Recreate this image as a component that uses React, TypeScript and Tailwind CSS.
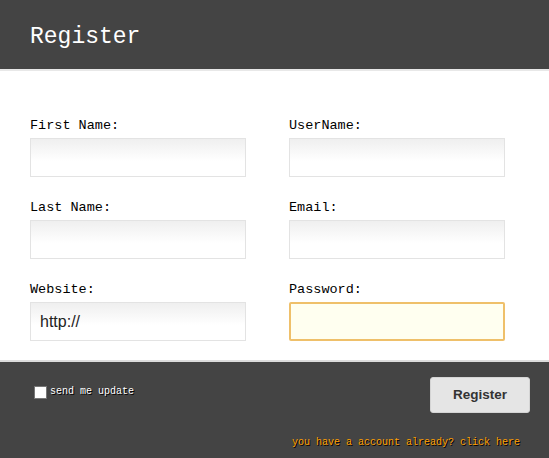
import React from "react";

const mono = { fontFamily: '"Liberation Mono", "DejaVu Sans Mono", monospace' };

function Field({ label, value, focused }: { label: string; value?: string; focused?: boolean }) {
  return (
    <div className="flex flex-col w-[216px]">
      <label className="text-[13.5px] leading-[16px] text-black" style={mono}>
        {label}
      </label>
      <input
        defaultValue={value}
        className={
          focused
            ? "mt-[4px] h-[39px] w-[216px] rounded-[2px] border-2 border-[#efc06a] bg-[#fffff0] px-[9px] text-[16px] text-[#333] outline-none"
            : "mt-[4px] h-[39px] w-[216px] border border-[#e3e3e3] bg-gradient-to-b from-[#efefef] to-white to-60% px-[9px] text-[16px] text-[#222] outline-none"
        }
        style={{ fontFamily: '"Liberation Sans", Arial, sans-serif' }}
      />
    </div>
  );
}

export default function App() {
  return (
    <div className="w-[549px] h-[458px] bg-white flex flex-col overflow-hidden">
      <header className="h-[71px] bg-[#444444] border-b-2 border-[#e8e8e8] flex items-center px-[30px] shrink-0">
        <h1 className="text-[23px] leading-[28px] text-white mt-[4px]" style={mono}>
          Register
        </h1>
      </header>
      <main className="pt-[47px] pl-[30px] pb-[19px] flex flex-col gap-[23px] shrink-0">
        <div className="flex gap-[43px]">
          <Field label="First Name:" />
          <Field label="UserName:" />
        </div>
        <div className="flex gap-[43px]">
          <Field label="Last Name:" />
          <Field label="Email:" />
        </div>
        <div className="flex gap-[43px]">
          <Field label="Website:" value="http://" />
          <Field label="Password:" focused />
        </div>
      </main>
      <footer className="flex-1 bg-[#444444] border-t-2 border-[#dcdcdc] flex justify-between pl-[34px] pr-[19px] pt-[15px]">
        <label className="flex items-center h-[14px] mt-[8px] gap-[3px]">
          <span className="w-[13px] h-[13px] bg-white border border-[#777]" />
          <span
            className="text-[10px] leading-[12px] text-white [text-shadow:1px_1px_0_#000]"
            style={mono}
          >
            send me update
          </span>
        </label>
        <div className="flex flex-col items-end">
          <button
            className="w-[100px] h-[36px] rounded-[3px] border border-[#d4d4d4] bg-[#e5e5e5] text-[13.5px] font-bold text-[#333]"
            style={{ fontFamily: '"Liberation Sans", Arial, sans-serif' }}
          >
            Register
          </button>
          <a
            className="mt-[24px] mr-[10px] text-[10px] leading-[12px] text-[#ffa000] [text-shadow:1px_1px_0_#000]"
            style={mono}
          >
            you have a account already? click here
          </a>
        </div>
      </footer>
    </div>
  );
}
